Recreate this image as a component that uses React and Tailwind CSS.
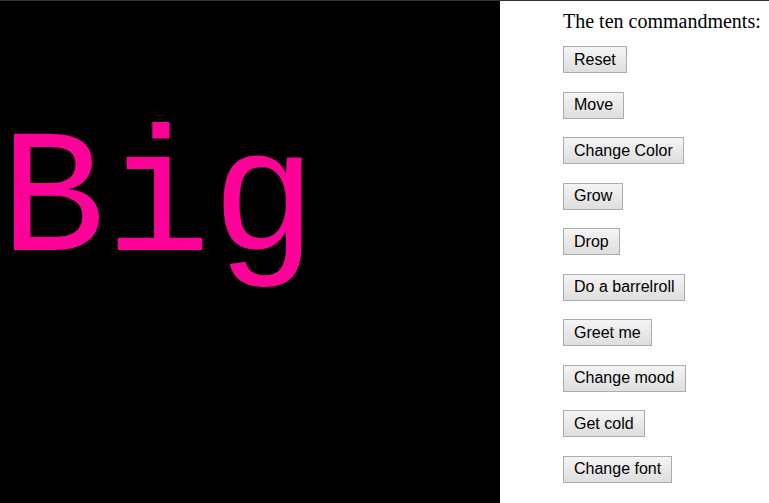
import React from 'react';

const commands = [
  'Reset',
  'Move',
  'Change Color',
  'Grow',
  'Drop',
  'Do a barrelroll',
  'Greet me',
  'Change mood',
  'Get cold',
  'Change font',
];

export default function App() {
  return (
    <div className="flex h-[503px] w-[769px] overflow-hidden border-t border-[#333333] bg-white">
      {/* stage */}
      <div className="h-[502px] w-[500px] shrink-0 bg-black pt-[114px]">
        <div className="font-['Courier_New','Nimbus_Mono_PS','FreeMono','Liberation_Mono',monospace] text-[176px] leading-none text-[#ff0099]">
          Big
        </div>
      </div>

      {/* controls */}
      <div className="flex flex-col items-start pl-[63px] pt-[5px]">
        <p className="mb-[10px] font-['Liberation_Serif',serif] text-[20px] text-black">
          The ten commandments:
        </p>
        <div className="flex flex-col items-start gap-[18.5px]">
          {commands.map((c) => (
            <button
              key={c}
              className="h-[27px] whitespace-nowrap border border-[#acacac] bg-gradient-to-b from-[#f4f4f4] to-[#dedede] px-[10px] font-['Liberation_Sans',Arial,sans-serif] text-[16px] text-black"
            >
              {c}
            </button>
          ))}
        </div>
      </div>
    </div>
  );
}
